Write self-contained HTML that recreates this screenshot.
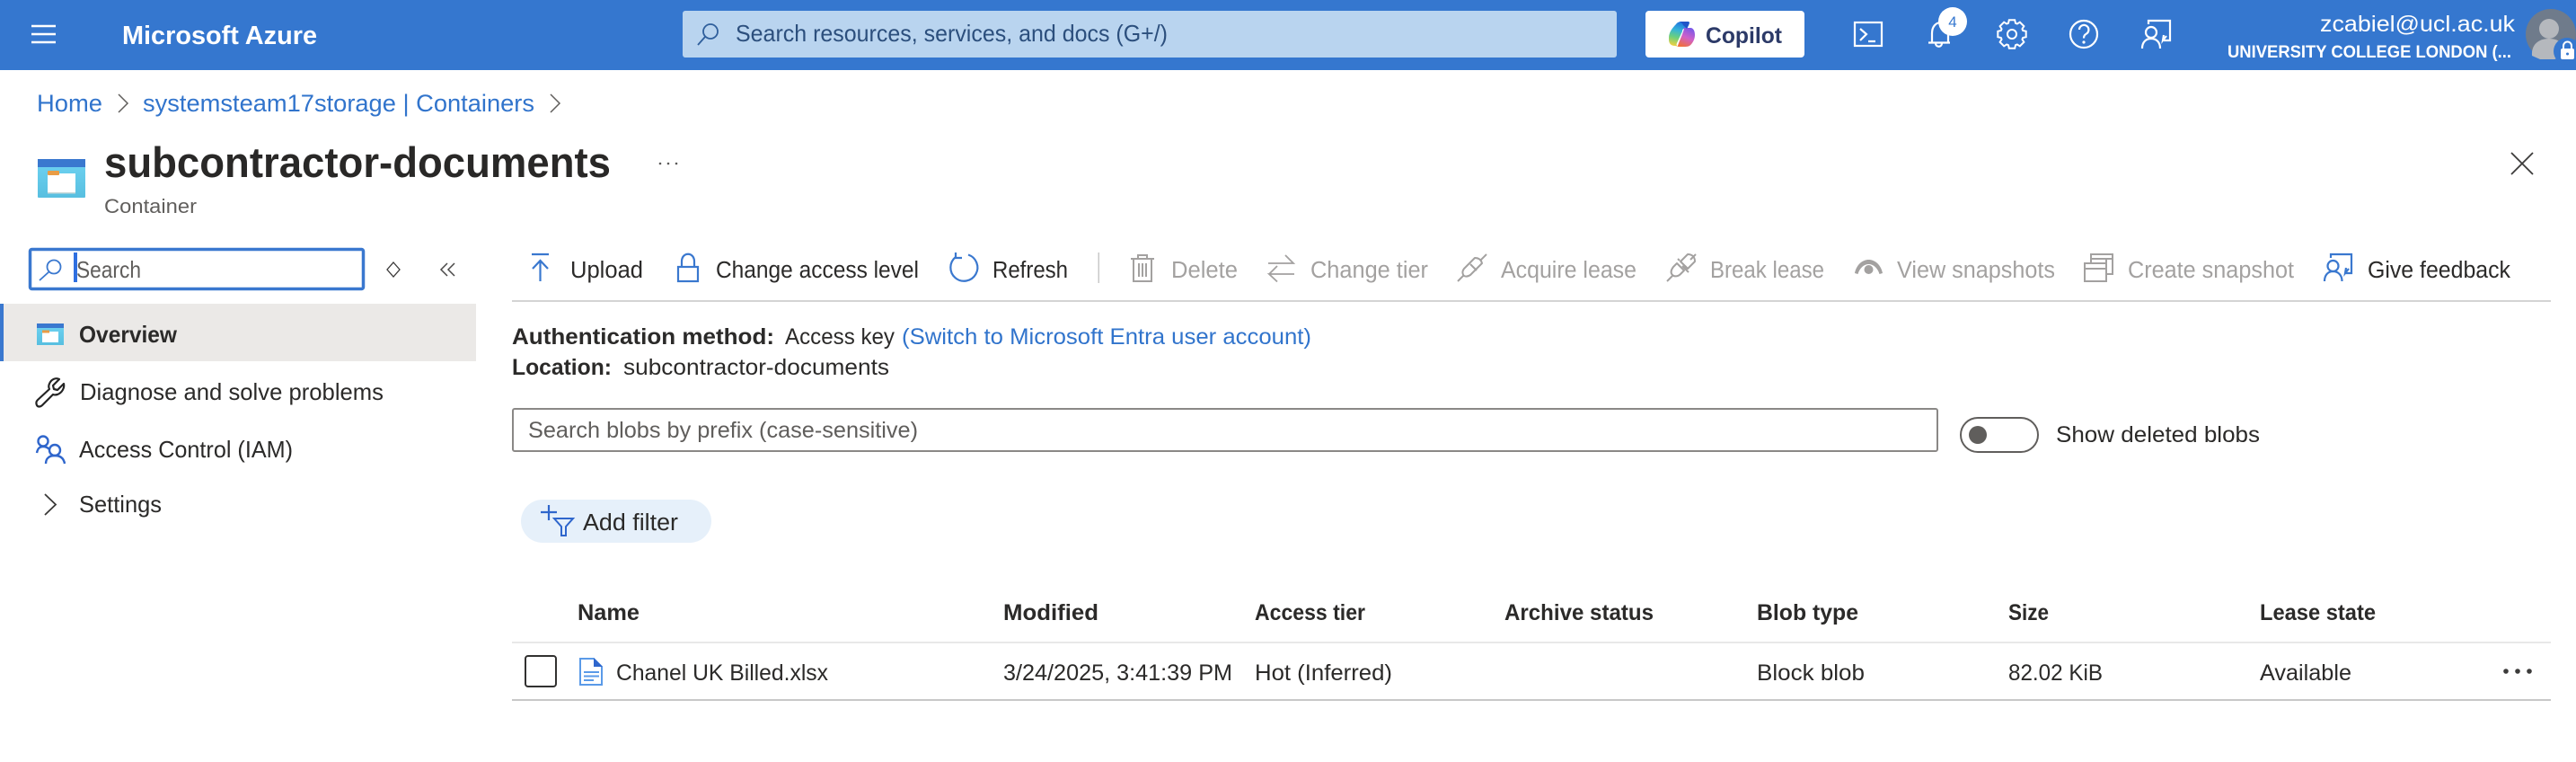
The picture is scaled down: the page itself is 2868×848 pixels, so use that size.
<!DOCTYPE html>
<html lang="en">
<head>
<meta charset="utf-8">
<title>subcontractor-documents</title>
<style>
html,body{margin:0;padding:0;background:#fff;width:2868px;height:848px;overflow:hidden}
svg{display:block;font-size:25px}
text{font-family:"Liberation Sans",sans-serif;fill:#2b2a29}
.b{font-weight:700}
.d{fill:#a3a1a0}
.l{fill:#3174cc}
.w{fill:#fff}
</style>
</head>
<body>
<svg xmlns="http://www.w3.org/2000/svg" width="2868" height="848" viewBox="0 0 2868 848">
<defs>
<linearGradient id="cyan" x1="0" y1="0" x2="0" y2="1"><stop offset="0" stop-color="#6fd3f2"/><stop offset="1" stop-color="#58bfe0"/></linearGradient>
<linearGradient id="cpA" x1="0.5" y1="0" x2="0.3" y2="1"><stop offset="0" stop-color="#1f72e0"/><stop offset=".35" stop-color="#35b4d8"/><stop offset=".65" stop-color="#6cd07c"/><stop offset="1" stop-color="#f2d040"/></linearGradient>
<linearGradient id="cpB" x1="0.7" y1="0" x2="0.3" y2="1"><stop offset="0" stop-color="#7a58e8"/><stop offset=".5" stop-color="#d060c8"/><stop offset="1" stop-color="#f0703c"/></linearGradient>
</defs>

<rect width="2868" height="848" fill="#fff"/>

<!-- top bar -->
<rect width="2868" height="78" fill="#3577cf"/>
<path d="M35 29H62M35 38H62M35 47H62" stroke="#fff" stroke-width="2.600" fill="none"/>
<text x="136" y="49" font-size="29" class="b w" textLength="217" lengthAdjust="spacingAndGlyphs">Microsoft Azure</text>

<rect x="760" y="12" width="1040" height="52" rx="3" fill="#b9d4ef"/>
<g fill="none" stroke="#2f5f9c" stroke-width="1.800"><circle cx="791" cy="35" r="8"/><path d="M785 41L777 50"/></g>
<text x="819" y="46" font-size="26" style="fill:#2c4f7d" textLength="481" lengthAdjust="spacingAndGlyphs">Search resources, services, and docs (G+/)</text>

<rect x="1832" y="12" width="177" height="52" rx="4" fill="#fff"/>
<path d="M1866 27c2-3 5-3 8-3h5c3 0 2 2 1 4l-9 21c-1 2-3 3-6 2-5 0-7-3-7-7v-2c0-6 4-11 8-15z" fill="url(#cpA)"/>
<path d="M1875 31h7c3 0 5 3 5 8 0 5-3 10-6 12-2 1-4 1-7 1h-5c-2 0-2-2-1-4l6-13c0-2 0-4 1-4z" fill="url(#cpB)"/>
<path d="M1875 32c-1 0-2 1-2 3l-6 13c-1 2 0 3 1 3 1-4 5-12 7-19z" fill="#fff"/>
<path d="M1870 24h9c2 0 2 2 1 4l-2 4-4-4c-1-2-2-3-4-4z" fill="#1f55c8"/>
<text x="1899" y="48" font-size="25" class="b" style="fill:#2c3a68" textLength="85" lengthAdjust="spacingAndGlyphs">Copilot</text>

<!-- terminal -->
<g fill="none" stroke="#fff" stroke-width="2.200">
<rect x="2065" y="25" width="30" height="26"/>
<path d="M2071 32l7 6-7 7M2080 46h8"/>
</g>
<!-- bell -->
<g fill="none" stroke="#fff" stroke-width="2.200">
<path d="M2151 47V37c0-7 4-12 10-12s8 5 8 12v10"/>
<path d="M2147 47.500h24M2155 48c0 5 7 5 7 0"/>
</g>
<circle cx="2174" cy="24" r="16" fill="#fff"/>
<text x="2174" y="30" font-size="17" text-anchor="middle" style="fill:#3577cf">4</text>
<!-- gear -->
<g fill="none" stroke="#fff" stroke-width="2" transform="translate(2240 38)">
<polygon points="-4,-12.200 -3.200,-15.700 3.200,-15.700 4,-12.200 5.800,-11.450 8.840,-13.360 13.360,-8.840 11.450,-5.800 12.200,-4 15.700,-3.200 15.700,3.200 12.200,4 11.450,5.800 13.360,8.840 8.840,13.360 5.800,11.450 4,12.200 3.200,15.700 -3.200,15.700 -4,12.200 -5.800,11.450 -8.840,13.360 -13.360,8.840 -11.450,5.800 -12.200,4 -15.700,3.200 -15.700,-3.200 -12.200,-4 -11.450,-5.800 -13.360,-8.840 -8.840,-13.360 -5.800,-11.450"/>
<circle r="5"/>
</g>
<!-- help -->
<g fill="none" stroke="#fff" stroke-width="2.200">
<circle cx="2320" cy="38" r="15"/>
<path d="M2315 33a5.200 5.200 0 1 1 8 4.500c-2 1.300-3 2.300-3 5"/>
</g>
<circle cx="2320" cy="47" r="1.600" fill="#fff"/>
<!-- feedback -->
<g fill="none" stroke="#fff" stroke-width="2.200">
<path d="M2392 27v-4h24v22h-7"/>
<path d="M2409 39l-1 6 4-5"/>
<circle cx="2395" cy="36" r="6"/>
<path d="M2385 54c0-7 4-11 10-11s10 4 10 11"/>
</g>

<text x="2583" y="35" font-size="25" class="w" textLength="217" lengthAdjust="spacingAndGlyphs">zcabiel@ucl.ac.uk</text>
<text x="2480" y="64" font-size="19" class="b w" textLength="316" lengthAdjust="spacingAndGlyphs">UNIVERSITY COLLEGE LONDON (...</text>

<!-- avatar -->
<circle cx="2840" cy="38" r="28" fill="#6f7b8b"/>
<circle cx="2838" cy="32" r="11" fill="#b5b8bd"/>
<path d="M2819 62c-1-12 7-19 19-19s18 7 18 19l-12 4h-16z" fill="#b5b8bd"/>
<circle cx="2858" cy="57" r="15" fill="#3577cf"/>
<rect x="2851" y="54" width="15" height="12" rx="2" fill="#fff"/>
<path d="M2854 54v-3a4.500 4.500 0 0 1 9 0v3" fill="none" stroke="#fff" stroke-width="2"/>
<circle cx="2858.500" cy="60" r="1.500" fill="#3577cf"/>

<!-- breadcrumb -->
<text x="41" y="124" font-size="27" class="l" textLength="73" lengthAdjust="spacingAndGlyphs">Home</text>
<path d="M132 106l10 10-10 10" transform="translate(0 -1)" fill="none" stroke="#605e5c" stroke-width="1.500"/>
<text x="159" y="124" font-size="27" class="l" textLength="436" lengthAdjust="spacingAndGlyphs">systemsteam17storage | Containers</text>
<path d="M613 106l10 10-10 10" transform="translate(0 -1)" fill="none" stroke="#605e5c" stroke-width="1.500"/>

<!-- title -->
<rect x="42" y="177" width="53" height="43" rx="1" fill="url(#cyan)"/>
<rect x="42" y="177" width="53" height="9" fill="#3a78cf"/>
<rect x="53" y="193" width="31" height="22" fill="#fff"/>
<rect x="53" y="214" width="31" height="1.500" fill="#c8d8d8"/>
<rect x="53" y="190" width="13" height="5" rx="1" fill="#e99c45"/>
<text x="116" y="197" font-size="47" class="b" style="fill:#292827" textLength="564" lengthAdjust="spacingAndGlyphs">subcontractor-documents</text>
<text x="116" y="237" font-size="22.500" style="fill:#605e5c" textLength="103" lengthAdjust="spacingAndGlyphs">Container</text>
<g fill="#5a5958"><circle cx="735" cy="182" r="1.300"/><circle cx="744" cy="182" r="1.300"/><circle cx="753" cy="182" r="1.300"/></g>
<path d="M2796 170l24 24M2820 170l-24 24" stroke="#3c3b3a" stroke-width="1.800" fill="none"/>

<!-- sidebar -->
<rect x="33.500" y="277.500" width="371" height="44" rx="2" fill="#fff" stroke="#3a78cf" stroke-width="3.500"/>
<g fill="none" stroke="#3a78cf" stroke-width="1.800"><circle cx="60" cy="297" r="7.500"/><path d="M54.500 302.500L44 312"/></g>
<text x="85" y="309" font-size="26" style="fill:#605e5c" textLength="72" lengthAdjust="spacingAndGlyphs">Search</text>
<rect x="82" y="281" width="4" height="33" fill="#2f6fe0"/>
<path d="M438 292l7 8-7 8-7-8z" fill="none" stroke="#3a3938" stroke-width="1.300"/>
<path d="M498 293l-7 7 7 7M506 293l-7 7 7 7" fill="none" stroke="#4a4948" stroke-width="1.500"/>

<rect x="0" y="338" width="530" height="64" fill="#ebe9e7"/>
<rect x="0" y="338" width="4" height="64" fill="#3a78cf"/>
<rect x="41" y="360" width="30" height="24" fill="url(#cyan)"/>
<rect x="41" y="360" width="30" height="5" fill="#3a78cf"/>
<rect x="47" y="369" width="18" height="12" fill="#fff"/>
<rect x="47" y="367.500" width="8" height="3" fill="#e99c45"/>
<text x="88" y="381" font-size="26" class="b" textLength="109" lengthAdjust="spacingAndGlyphs">Overview</text>

<path d="M66 422l-7 7 1 4 4 1 7-7c1 5-2 10-7 12-2 .5-4 .5-5 0L47 451c-2 2-5 2-6 0s-1-4 1-6L55 433c-1-2-1-4 0-6 2-5 7-7 11-5z" fill="none" stroke="#242424" stroke-width="2.200" stroke-linejoin="round"/>
<text x="89" y="445" font-size="26" textLength="338" lengthAdjust="spacingAndGlyphs">Diagnose and solve problems</text>

<g fill="none" stroke="#2f66cc" stroke-width="2.400">
<circle cx="48" cy="491" r="5.500"/>
<path d="M41 504c1-5 3-7 7-7 3 0 5 1 7 3"/>
<circle cx="61" cy="501" r="6"/>
<path d="M51 516c0-6 4-9 10-9s10 3 11 9"/>
</g>
<text x="88" y="509" font-size="26" textLength="238" lengthAdjust="spacingAndGlyphs">Access Control (IAM)</text>

<path d="M50 550l12 11.500-12 11.500" fill="none" stroke="#3a3938" stroke-width="1.800"/>
<text x="88" y="570" font-size="26" textLength="92" lengthAdjust="spacingAndGlyphs">Settings</text>

<!-- toolbar -->
<path d="M592 283h19M601.500 313V290M593 299l8.500-9 8.500 9" fill="none" stroke="#3a78cf" stroke-width="2.200"/>
<text x="635" y="309" font-size="25.500" textLength="81" lengthAdjust="spacingAndGlyphs">Upload</text>
<g fill="none" stroke="#3a78cf" stroke-width="2.200"><rect x="755" y="297" width="22" height="16"/><path d="M759 297v-6c0-11 14-11 14 0v6"/></g>
<text x="797" y="309" font-size="25.500" textLength="226" lengthAdjust="spacingAndGlyphs">Change access level</text>
<g fill="none" stroke="#3a78cf" stroke-width="2.200"><path d="M1064 286a15 15 0 1 0 14-2.500"/><path d="M1064 281v6h7"/></g>
<text x="1105" y="309" font-size="25.500" textLength="84" lengthAdjust="spacingAndGlyphs">Refresh</text>
<rect x="1222.500" y="281" width="1.500" height="34" fill="#c8c8c8"/>

<g fill="none" stroke="#a3a1a0" stroke-width="2">
<path d="M1259 288h26M1267 288v-4h10v4M1262 288v25h20v-25M1268 293v15M1272 293v15M1276 293v15"/>
</g>
<text x="1304" y="309" font-size="25.500" class="d" textLength="74" lengthAdjust="spacingAndGlyphs">Delete</text>
<path d="M1412 293h28l-9-9M1441 305h-28l9 8.500M1413 305l9-9" fill="none" stroke="#a3a1a0" stroke-width="1.800"/>
<text x="1459" y="309" font-size="25.500" class="d" textLength="131" lengthAdjust="spacingAndGlyphs">Change tier</text>
<g fill="none" stroke="#a3a1a0" stroke-width="2" stroke-linejoin="round">
<path d="M1623 313l7-7M1648 290l7-7"/>
<path d="M1642 287l-12 12c-3 4-1 7 0 8 2 1 4 1 7-1l13-13c-1-4-4-6-8-6z"/>
<path d="M1637 294l7 7"/>
</g>
<text x="1671" y="309" font-size="25.500" class="d" textLength="151" lengthAdjust="spacingAndGlyphs">Acquire lease</text>
<g fill="none" stroke="#a3a1a0" stroke-width="2" stroke-linejoin="round">
<path d="M1856 313l6-6M1882 289l6-6"/>
<path d="M1863 297c-3 4-3 7-1 9s6 2 9-1l4-4-8-8zM1870 290l-2-2M1876 296l2 2"/>
<path d="M1872 296l7 7M1870 291l8-8c5 0 8 3 8 8l-8 8z" transform="translate(1 0)"/>
</g>
<text x="1904" y="309" font-size="25.500" class="d" textLength="127" lengthAdjust="spacingAndGlyphs">Break lease</text>
<path d="M2065 304c2-10 9-15 15.500-15s13.500 5 15.500 15l-3.500 1c-2-7-7-11-12-11s-10 4-12 11z" fill="#a3a1a0"/>
<circle cx="2080.500" cy="300" r="5" fill="#a3a1a0"/>
<text x="2112" y="309" font-size="25.500" class="d" textLength="176" lengthAdjust="spacingAndGlyphs">View snapshots</text>
<g fill="none" stroke="#a3a1a0" stroke-width="2">
<rect x="2321" y="293" width="24" height="20"/>
<path d="M2321 299h24M2328 293v-5h17v5M2328 288v-5h24v22h-7M2345 288h7"/>
</g>
<text x="2369" y="309" font-size="25.500" class="d" textLength="185" lengthAdjust="spacingAndGlyphs">Create snapshot</text>
<g fill="none" stroke="#3a78cf" stroke-width="2.200">
<path d="M2595 287v-4h23v21h-7"/>
<path d="M2612 298l-1 6 4-5"/>
<circle cx="2597.500" cy="296" r="6"/>
<path d="M2588 313c0-7 4-11 9.500-11s10 4 10 11"/>
</g>
<text x="2636" y="309" font-size="25.500" textLength="159" lengthAdjust="spacingAndGlyphs">Give feedback</text>
<rect x="570" y="334" width="2270" height="2" fill="#d4d4d4"/>

<!-- info -->
<text x="570" y="383" font-size="25" class="b" textLength="292" lengthAdjust="spacingAndGlyphs">Authentication method:</text>
<text x="874" y="383" font-size="25" textLength="122" lengthAdjust="spacingAndGlyphs">Access key</text>
<text x="1004" y="383" font-size="25" class="l" textLength="456" lengthAdjust="spacingAndGlyphs">(Switch to Microsoft Entra user account)</text>
<text x="570" y="417" font-size="25" class="b" textLength="111" lengthAdjust="spacingAndGlyphs">Location:</text>
<text x="694" y="417" font-size="25" textLength="296" lengthAdjust="spacingAndGlyphs">subcontractor-documents</text>

<!-- blob search -->
<rect x="571" y="455" width="1586" height="47" rx="2" fill="#fff" stroke="#8a8886" stroke-width="2"/>
<text x="588" y="487" font-size="25" style="fill:#605e5c" textLength="434" lengthAdjust="spacingAndGlyphs">Search blobs by prefix (case-sensitive)</text>

<rect x="2183" y="465" width="86" height="38" rx="19" fill="#fff" stroke="#605e5c" stroke-width="2"/>
<circle cx="2202" cy="484" r="10" fill="#605e5c"/>
<text x="2289" y="492" font-size="25" textLength="227" lengthAdjust="spacingAndGlyphs">Show deleted blobs</text>

<!-- filter -->
<rect x="580" y="556" width="212" height="48" rx="24" fill="#e6f0fa"/>
<path d="M602 570h18M611 562v17" fill="none" stroke="#2f66cc" stroke-width="2.200"/>
<path d="M617 577h21l-8 9v10h-5v-10z" fill="none" stroke="#2f66cc" stroke-width="2"/>
<text x="649" y="590" font-size="25.500" textLength="106" lengthAdjust="spacingAndGlyphs">Add filter</text>

<!-- table -->
<text x="643" y="690" font-size="25" class="b" textLength="69" lengthAdjust="spacingAndGlyphs">Name</text>
<text x="1117" y="690" font-size="25" class="b" textLength="106" lengthAdjust="spacingAndGlyphs">Modified</text>
<text x="1397" y="690" font-size="25" class="b" textLength="123" lengthAdjust="spacingAndGlyphs">Access tier</text>
<text x="1675" y="690" font-size="25" class="b" textLength="166" lengthAdjust="spacingAndGlyphs">Archive status</text>
<text x="1956" y="690" font-size="25" class="b" textLength="113" lengthAdjust="spacingAndGlyphs">Blob type</text>
<text x="2236" y="690" font-size="25" class="b" textLength="45" lengthAdjust="spacingAndGlyphs">Size</text>
<text x="2516" y="690" font-size="25" class="b" textLength="129" lengthAdjust="spacingAndGlyphs">Lease state</text>
<rect x="570" y="714" width="2270" height="2" fill="#e8e8e8"/>

<rect x="585" y="730" width="34" height="34" rx="3" fill="#fff" stroke="#323130" stroke-width="2"/>
<path d="M646 733h15l9 9v20h-24z" fill="#fff" stroke="#5a9ae8" stroke-width="2"/>
<path d="M661 732v10h10z" fill="#2f66cc"/>
<path d="M650 748h17M650 752.500h17M650 757h11" fill="none" stroke="#5a9ae8" stroke-width="2"/>
<text x="686" y="757" font-size="25" textLength="236" lengthAdjust="spacingAndGlyphs">Chanel UK Billed.xlsx</text>
<text x="1117" y="757" font-size="25" textLength="255" lengthAdjust="spacingAndGlyphs">3/24/2025, 3:41:39 PM</text>
<text x="1397" y="757" font-size="25" textLength="153" lengthAdjust="spacingAndGlyphs">Hot (Inferred)</text>
<text x="1956" y="757" font-size="25" textLength="120" lengthAdjust="spacingAndGlyphs">Block blob</text>
<text x="2236" y="757" font-size="25" textLength="105" lengthAdjust="spacingAndGlyphs">82.02 KiB</text>
<text x="2516" y="757" font-size="25" textLength="102" lengthAdjust="spacingAndGlyphs">Available</text>
<g fill="#3c3b3a"><circle cx="2790" cy="747" r="2.800"/><circle cx="2803" cy="747" r="2.800"/><circle cx="2816" cy="747" r="2.800"/></g>
<rect x="570" y="778" width="2270" height="2" fill="#c8c8c8"/>
</svg>
</body>
</html>
